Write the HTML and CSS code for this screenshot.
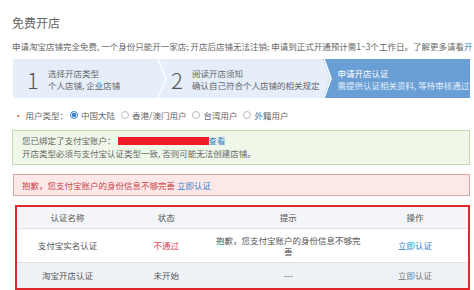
FILE: index.html
```html
<!DOCTYPE html>
<html lang="zh-CN">
<head>
  <meta charset="UTF-8" />
  <meta name="viewport" content="width=device-width, initial-scale=1.0"/>
  <title>免费开店</title>
  <link rel="stylesheet" href="styles.css">
</head>
<body>

  <div class="page">
    <h1 class="title">免费开店</h1>
    <p class="intro">申请淘宝店铺完全免费, 一个身份只能开一家店; 开店后店铺无法注销; 申请到正式开通预计需1~3个工作日。了解更多请看<a class="link">开</a></p>

    <!-- steps -->
    <div class="steps">
      <div class="step step-1">
        <span class="num">1</span>
        <div class="step-text">
          <span class="step-title">选择开店类型</span>
          <span class="step-sub">个人店铺, 企业店铺</span>
        </div>
      </div>
      <div class="step step-2">
        <svg class="chev" width="12" height="39" viewBox="0 0 12 39">
          <polyline points="1,0 9,19.5 1,39" fill="none" stroke="#fff" stroke-width="1.4"/>
        </svg>
        <span class="num">2</span>
        <div class="step-text">
          <span class="step-title">阅读开店须知</span>
          <span class="step-sub">确认自己符合个人店铺的相关规定</span>
        </div>
      </div>
      <div class="step step-3">
        <svg class="chev" width="14" height="39" viewBox="0 0 14 39">
          <polygon points="0,0 3,0 10,19.5 3,39 0,39" fill="#e5eef9"/>
          <polyline points="4,0 11,19.5 4,39" fill="none" stroke="#fff" stroke-width="1.6"/>
        </svg>
        <div class="step-text">
          <span class="step-title">申请开店认证</span>
          <span class="step-sub">需提供认证相关资料, 等待审核通过</span>
        </div>
      </div>
    </div>

    <div class="user-type">
      <span class="req">•</span>用户类型：
      <span class="radio checked"></span>中国大陆
      <span class="radio"></span>香港/澳门用户
      <span class="radio"></span>台湾用户
      <span class="radio"></span>外籍用户
    </div>

    <div class="notice notice-ok">
      <div>您已绑定了支付宝账户：<span class="mask"></span><a class="link">查看</a></div>
      <div>开店类型必须与支付宝认证类型一致, 否则可能无法创建店铺。</div>
    </div>

    <div class="notice notice-err">
      抱歉，您支付宝账户的身份信息不够完善 <a class="link">立即认证</a>
    </div>

    <table class="auth-table">
      <tr>
        <th class="c1">认证名称</th>
        <th class="c2">状态</th>
        <th class="c3">提示</th>
        <th class="c4">操作</th>
      </tr>
      <tr class="row-tall">
        <td>支付宝实名认证</td>
        <td class="fail">不通过</td>
        <td>抱歉，您支付宝账户的身份信息不够完善</td>
        <td><a class="link">立即认证</a></td>
      </tr>
      <tr class="row-alt">
        <td>淘宝开店认证</td>
        <td>未开始</td>
        <td>---</td>
        <td class="muted">立即认证</td>
      </tr>
    </table>
  </div>

</body>
</html>
```

FILE: styles.css
```css
body {
  margin: 0;
  background: #fff;
  font-family: "Noto Sans CJK SC", "Noto Sans", sans-serif;
  font-size: 8.5px;
  color: #666;
}

.page {
  padding: 16px 4px 0 12px;
}

.title {
  margin: 0;
  font-size: 12px;
  line-height: 14px;
  font-weight: normal;
  color: #666;
}

.intro {
  margin: 10px -4px 0 0;
  line-height: 12px;
  white-space: nowrap;
  color: #666;
}

.link {
  color: #2f7fcb;
}

/* steps bar */
.steps {
  display: flex;
  height: 39px;
  margin: 7px 0 0 1px;
  background: #e5eef9;
}

.step {
  position: relative;
  display: flex;
  align-items: center;
  box-sizing: border-box;
}

.step-1 {
  flex: 0 0 144px;
  padding-left: 14px;
}

.step-2 {
  flex: 0 0 160px;
  padding-left: 14px;
}

.step-3 {
  flex: 1;
  min-width: 0;
  padding-left: 18px;
  background: #6a9fd6;
  overflow: hidden;
}

.chev {
  position: absolute;
  left: 0;
  top: 0;
}

.num {
  width: 21px;
  font-size: 22px;
  line-height: 24px;
  font-weight: 300;
  color: #555;
}

.step-text {
  display: flex;
  flex-direction: column;
  line-height: 12px;
  white-space: nowrap;
}

.step-3 .step-title {
  color: #fff;
}

.step-3 .step-sub {
  color: #e3eefa;
}

/* user type */
.user-type {
  display: flex;
  align-items: center;
  margin-top: 11px;
  line-height: 12px;
  color: #666;
}

.req {
  color: #e4393c;
  margin: 0 3px 0 2px;
}

.radio {
  box-sizing: border-box;
  width: 8px;
  height: 8px;
  margin: 0 3px 0 6px;
  border: 1px solid #bbb;
  border-radius: 50%;
  background: #fff;
}

.radio.checked {
  margin-left: 2px;
  border-color: #3a82d0;
  background: radial-gradient(circle, #3a82d0 0 2px, #fff 2.5px);
}

/* notices */
.notice {
  margin-top: 9px;
  box-sizing: border-box;
}

.notice-ok {
  padding: 3px 9px 4px;
  line-height: 13px;
  background: #eff7e9;
  border: 1px solid #c6d9b2;
  color: #666;
}

.mask {
  display: inline-block;
  width: 91px;
  height: 8px;
  margin-left: 2px;
  vertical-align: -1px;
  background: #ee1c25;
}

.notice-err {
  margin-left: 1px;
  padding: 0 8px;
  line-height: 20px;
  background: #fde8e8;
  border: 1px solid #d8a8a8;
  color: #c9464a;
}

/* table */
.auth-table {
  width: 455px;
  margin: 9px 0 0 3px;
  border-collapse: collapse;
  border: 2px solid #df272c;
  text-align: center;
}

.auth-table th,
.auth-table td {
  padding: 0 1px;
  font-weight: normal;
  color: #555;
  line-height: 11px;
  border-bottom: 1px solid #dfe3e8;
}

.auth-table th {
  height: 21px;
  background: #f3f5f8;
}

.c1 { width: 101px; }
.c2 { width: 96px; }
.c3 { width: 148px; }
.c4 { width: 106px; }

.row-tall td {
  height: 33px;
  background: #fff;
}

.row-alt td {
  height: 25px;
  background: #eef1f5;
}

.auth-table .fail {
  color: #d9455a;
}

.auth-table .muted {
  color: #777;
}
```
